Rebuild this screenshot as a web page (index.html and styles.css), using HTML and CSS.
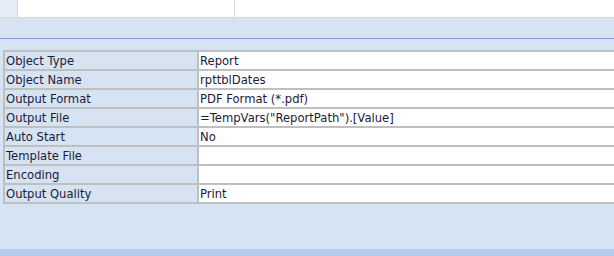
FILE: index.html
```html
<!DOCTYPE html>
<html>
<head>
<meta charset="utf-8">
<link rel="stylesheet" href="styles.css">
</head>
<body>
<div class="page">
  <div class="topgrid">
    <div class="stub"></div>
    <div class="cell"></div>
    <div class="rest"></div>
  </div>
  <div class="band"></div>
  <div class="panel">
    <table class="props">
      <tr><td class="lab"><span>Object Type</span></td><td class="val"><span>Report</span></td></tr>
      <tr><td class="lab"><span>Object Name</span></td><td class="val"><span>rpttblDates</span></td></tr>
      <tr><td class="lab"><span>Output Format</span></td><td class="val"><span>PDF Format (*.pdf)</span></td></tr>
      <tr><td class="lab"><span>Output File</span></td><td class="val"><span>=TempVars("ReportPath").[Value]</span></td></tr>
      <tr><td class="lab"><span>Auto Start</span></td><td class="val"><span>No</span></td></tr>
      <tr><td class="lab"><span>Template File</span></td><td class="val"><span></span></td></tr>
      <tr><td class="lab"><span>Encoding</span></td><td class="val"><span></span></td></tr>
      <tr><td class="lab"><span>Output Quality</span></td><td class="val"><span>Print</span></td></tr>
    </table>
  </div>
  <div class="footer"></div>
</div>
</body>
</html>
```
FILE: styles.css
```css
html, body {
  margin: 0;
  padding: 0;
}
body {
  width: 614px;
  height: 256px;
  overflow: hidden;
  background: #d5e3f2;
  font-family: "DejaVu Sans", sans-serif;
  font-size: 11.6px;
}
.page {
  display: flex;
  flex-direction: column;
  height: 256px;
}
.topgrid {
  display: flex;
  height: 17px;
  background: #ffffff;
  border-bottom: 1px solid #d3d8de;
}
.stub {
  width: 17px;
  background: #e7edf6;
  border-right: 1px solid #d0d7e0;
}
.cell {
  width: 216px;
  border-right: 1px solid #d3d8e0;
}
.rest {
  flex: 1;
}
.band {
  height: 20px;
  border-bottom: 1px solid #7ba1d4;
}
.panel {
  flex: 1;
  padding: 11px 0 0 3px;
  overflow: hidden;
}
.props {
  border-collapse: separate;
  border-spacing: 2px;
  background: #bfbfbf;
  width: 700px;
  table-layout: fixed;
}
.props td {
  padding: 0;
  height: 17px;
  vertical-align: top;
  overflow: hidden;
  white-space: nowrap;
}
.props td span {
  display: block;
  height: 17px;
  line-height: 18px;
  padding-left: 1px;
  color: #1b1b3a;
}
.lab {
  width: 192px;
  background: #d5e3f2;
}
.val {
  background: #ffffff;
}
.footer {
  height: 7px;
  background: #b3cbef;
}
```
